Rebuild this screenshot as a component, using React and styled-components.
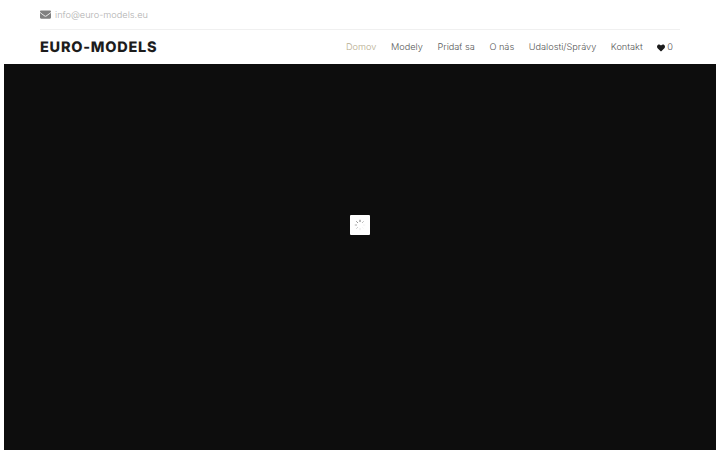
import React from "react";
import styled, { createGlobalStyle } from "styled-components";
import { FaEnvelope, FaHeart } from "react-icons/fa";

const GlobalStyle = createGlobalStyle`
  html, body {
    margin: 0;
    padding: 0;
    background: #ffffff;
    overflow: hidden;
  }
  body {
    font-family: Inter, "Liberation Sans", sans-serif;
    text-rendering: geometricPrecision;
  }
`;

const Page = styled.div`
  display: flex;
  flex-direction: column;
  height: 450px;
`;

const Header = styled.header`
  margin: 0 40px;
  flex: none;
`;

const TopBar = styled.div`
  display: flex;
  align-items: center;
  gap: 4px;
  height: 29px;
  box-sizing: content-box;
  border-bottom: 1px solid #f0f0f0;
  color: #b0b0b0;
  font-size: 9.2px;
  font-weight: 300;
`;

const TopText = styled.span`
  padding-top: 1px;
`;

const Mail = styled(FaEnvelope)`
  width: 11px;
  height: 11px;
  color: #808080;
`;

const NavRow = styled.div`
  display: flex;
  align-items: center;
  justify-content: space-between;
  height: 34px;
`;

const Logo = styled.div`
  color: #1c1c1c;
  font-size: 14.5px;
  font-weight: 800;
  letter-spacing: 0.75px;
`;

const Nav = styled.nav`
  display: flex;
  align-items: center;
  gap: 14.6px;
  padding: 1px 7px 0 0;
`;

const NavItem = styled.a`
  color: ${({ $active }) => ($active ? "#b5ab8c" : "#555555")};
  font-size: 9.2px;
  font-weight: 300;
`;

const Wish = styled.span`
  display: flex;
  align-items: center;
  gap: 2px;
  color: #555555;
  font-size: 9.2px;
  font-weight: 300;
`;

const Heart = styled(FaHeart)`
  width: 8px;
  height: 8px;
  color: #1c1c1c;
`;

const Hero = styled.main`
  flex: 1;
  margin: 0 4px;
  background: #0d0d0d;
`;

// preloader sits over the hero, centred on the window
const Loader = styled.div`
  position: fixed;
  top: 215px;
  left: 350px;
  width: 20px;
  height: 20px;
  display: flex;
  align-items: center;
  justify-content: center;
  background: #ffffff;
  border-radius: 1px;
`;

const spokes = [
  { angle: 0, color: "#666666" },
  { angle: 45, color: "#b0b0b0" },
  { angle: 90, color: "#f0f0f0" },
  { angle: 135, color: "#f4f4f4" },
  { angle: 180, color: "#e4e4e4" },
  { angle: 225, color: "#c4c4c4" },
  { angle: 270, color: "#a0a0a0" },
  { angle: 315, color: "#808080" },
];

const links = ["Domov", "Modely", "Pridať sa", "O nás", "Udalosti/Správy", "Kontakt"];

export default function App() {
  return (
    <Page>
      <GlobalStyle />
      <Header>
        <TopBar>
          <Mail />
          <TopText>info@euro-models.eu</TopText>
        </TopBar>
        <NavRow>
          <Logo>EURO-MODELS</Logo>
          <Nav>
            {links.map((link, i) => (
              <NavItem key={link} $active={i === 0}>
                {link}
              </NavItem>
            ))}
            <Wish>
              <Heart />0
            </Wish>
          </Nav>
        </NavRow>
      </Header>
      <Hero />
      <Loader>
        <svg width="12" height="12" viewBox="0 0 12 12">
          {spokes.map((s) => (
            <line
              key={s.angle}
              x1="6"
              y1="0.8"
              x2="6"
              y2="3"
              stroke={s.color}
              strokeWidth="0.9"
              transform={`rotate(${s.angle} 6 6)`}
            />
          ))}
        </svg>
      </Loader>
    </Page>
  );
}
